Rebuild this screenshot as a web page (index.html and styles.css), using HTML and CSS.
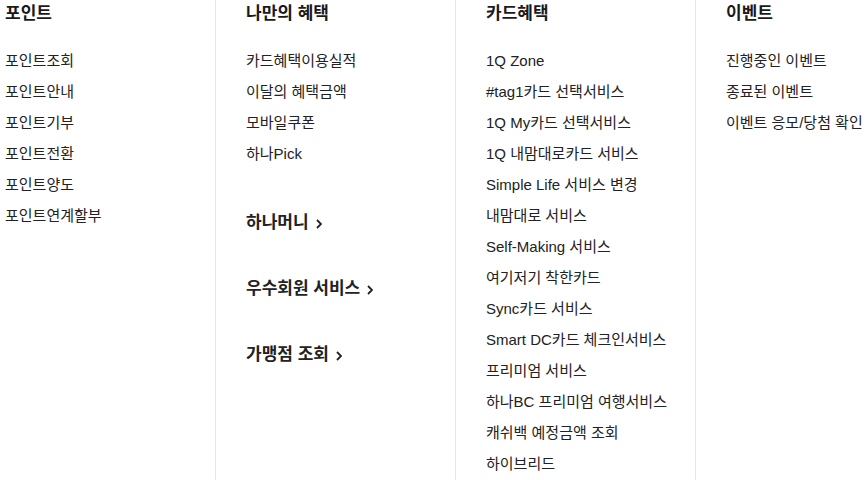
FILE: index.html
```html
<!DOCTYPE html>
<html lang="ko">
<head>
<meta charset="utf-8">
<title>혜택 메뉴</title>
<link rel="stylesheet" href="styles.css">
</head>
<body>
<div class="menu">
  <section class="col col-first">
    <h2 class="col-title">포인트</h2>
    <ul class="links">
      <li>포인트조회</li>
      <li>포인트안내</li>
      <li>포인트기부</li>
      <li>포인트전환</li>
      <li>포인트양도</li>
      <li>포인트연계할부</li>
    </ul>
  </section>
  <section class="col">
    <h2 class="col-title">나만의 혜택</h2>
    <ul class="links">
      <li>카드혜택이용실적</li>
      <li>이달의 혜택금액</li>
      <li>모바일쿠폰</li>
      <li>하나Pick</li>
    </ul>
    <h3 class="sub-title sub-first">하나머니<svg class="chev" viewBox="0 0 6 10" width="6" height="10"><path d="M1 1l4 4-4 4" fill="none" stroke="currentColor" stroke-width="1.8"/></svg></h3>
    <h3 class="sub-title">우수회원 서비스<svg class="chev" viewBox="0 0 6 10" width="6" height="10"><path d="M1 1l4 4-4 4" fill="none" stroke="currentColor" stroke-width="1.8"/></svg></h3>
    <h3 class="sub-title">가맹점 조회<svg class="chev" viewBox="0 0 6 10" width="6" height="10"><path d="M1 1l4 4-4 4" fill="none" stroke="currentColor" stroke-width="1.8"/></svg></h3>
  </section>
  <section class="col">
    <h2 class="col-title">카드혜택</h2>
    <ul class="links">
      <li>1Q Zone</li>
      <li>#tag1카드 선택서비스</li>
      <li>1Q My카드 선택서비스</li>
      <li>1Q 내맘대로카드 서비스</li>
      <li>Simple Life 서비스 변경</li>
      <li>내맘대로 서비스</li>
      <li>Self-Making 서비스</li>
      <li>여기저기 착한카드</li>
      <li>Sync카드 서비스</li>
      <li>Smart DC카드 체크인서비스</li>
      <li>프리미엄 서비스</li>
      <li>하나BC 프리미엄 여행서비스</li>
      <li>캐쉬백 예정금액 조회</li>
      <li>하이브리드</li>
    </ul>
  </section>
  <section class="col col-last">
    <h2 class="col-title">이벤트</h2>
    <ul class="links">
      <li>진행중인 이벤트</li>
      <li>종료된 이벤트</li>
      <li>이벤트 응모/당첨 확인</li>
    </ul>
  </section>
</div>
</body>
</html>
```

FILE: styles.css
```css
html, body {
  margin: 0;
  padding: 0;
  background: #fff;
}
body {
  font-family: "Liberation Sans", "Noto Sans CJK KR", sans-serif;
  color: #222;
  overflow: hidden;
}
.menu {
  display: flex;
  width: 868px;
  height: 480px;
  overflow: hidden;
}
.col {
  width: 240px;
  flex: none;
  box-sizing: border-box;
  padding-left: 30px;
  border-left: 1px solid #e6e6e6;
}
.col-first {
  width: 215px;
  padding-left: 5px;
  border-left: none;
}
.col-last {
  flex: 1 1 auto;
  width: auto;
  min-width: 0;
}
.col-title {
  margin: 0;
  font-size: 17px;
  font-weight: 700;
  line-height: 28px;
  color: #1a1a1a;
}
.links {
  list-style: none;
  margin: 17px 0 0;
  padding: 0;
}
.links li {
  font-size: 15px;
  line-height: 31px;
  height: 31px;
  color: #222;
  white-space: nowrap;
}
.sub-title {
  margin: 38px 0 0;
  font-size: 17px;
  font-weight: 700;
  line-height: 28px;
  color: #222;
  display: flex;
  align-items: center;
  gap: 7px;
}
.sub-first {
  margin-top: 40px;
}
.chev {
  display: block;
  margin-top: 2px;
}
```
